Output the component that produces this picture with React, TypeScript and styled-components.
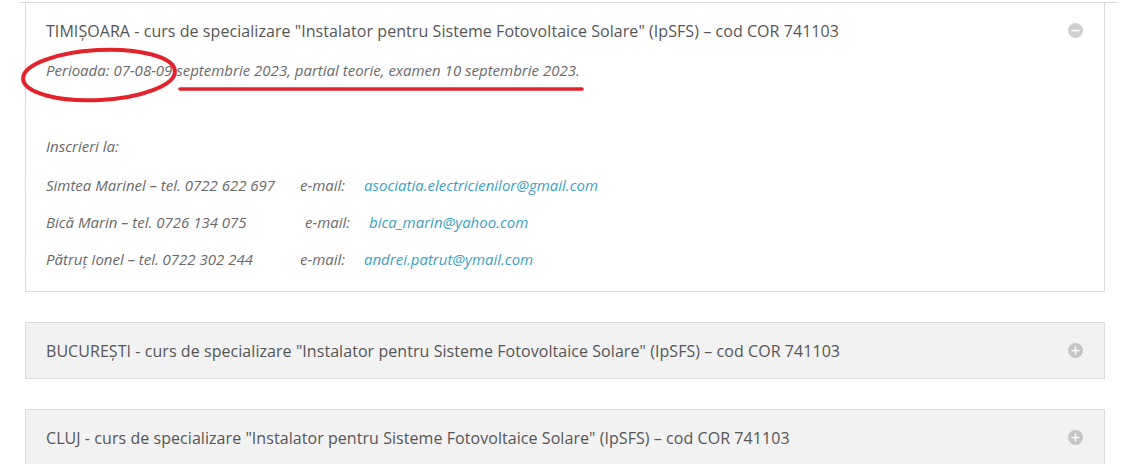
import React from "react";
import styled, { createGlobalStyle } from "styled-components";

const GlobalStyle = createGlobalStyle`
  html, body {
    margin: 0;
    padding: 0;
    background: #ffffff;
  }
  body {
    font-family: "Open Sans", "Noto Sans", sans-serif;
    color: #555;
  }
`;

const Page = styled.div`
  position: relative;
  width: 1128px;
  height: 464px;
  overflow: hidden;
  padding: 2px 23px 0 25px;
  box-sizing: border-box;
  display: flex;
  flex-direction: column;
  gap: 30px;
`;

const TopRule = styled.div`
  position: absolute;
  left: 20px;
  right: 10px;
  top: 2px;
  height: 1px;
  background: #dcdcdc;
`;

const Panel = styled.div<{ open?: boolean }>`
  position: relative;
  border: 1px solid #dcdcdc;
  background: ${(p) => (p.open ? "#ffffff" : "#f2f2f2")};
  flex-shrink: 0;
`;

const Header = styled.div`
  display: flex;
  align-items: center;
  justify-content: space-between;
  height: 55px;
  padding: 0 20px 0 20px;
`;

const Title = styled.h3`
  margin: 0;
  font-size: 16px;
  font-weight: 400;
  color: #555;
  letter-spacing: 0.06px;
`;

const ToggleIcon = styled.svg`
  width: 15px;
  height: 15px;
  margin-right: 1px;
`;

const Body = styled.div`
  margin-top: -2px;
  padding: 0 20px 9px 20px;
  font-size: 15px;
  font-style: italic;
  color: #6a6a6a;
`;

const Line = styled.p<{ gapAfter?: number; tall?: boolean }>`
  margin: 0;
  height: ${(p) => (p.tall ? 39 : 37)}px;
  line-height: 28px;
  margin-bottom: ${(p) => p.gapAfter ?? 0}px;
  white-space: pre;
`;

const Label = styled.span<{ w: number }>`
  display: inline-block;
  width: ${(p) => p.w}px;
`;

const Mail = styled.a`
  color: #3c9fc5;
  text-decoration: none;
`;

const Annotation = styled.svg`
  position: absolute;
  left: -25px;
  top: -2px;
  width: 700px;
  height: 120px;
  pointer-events: none;
  overflow: visible;
`;

const Toggle = ({ open, bg }: { open?: boolean; bg: string }) => (
  <ToggleIcon viewBox="0 0 15 15">
    <circle cx="7.5" cy="7.5" r="7.5" fill={bg} />
    <rect x="3.5" y="6.8" width="8" height="1.5" fill="#fff" />
    {!open && <rect x="6.75" y="3.5" width="1.5" height="8" fill="#fff" />}
  </ToggleIcon>
);

const contacts = [
  { name: "Simtea Marinel – tel. 0722 622 697", w1: 254, w2: 64, mail: "asociatia.electricienilor@gmail.com" },
  { name: "Bică Marin – tel. 0726 134 075", w1: 259, w2: 64, mail: "bica_marin@yahoo.com" },
  { name: "Pătruț Ionel – tel. 0722 302 244", w1: 254, w2: 64, mail: "andrei.patrut@ymail.com" },
];

const course =
  ' - curs de specializare "Instalator pentru Sisteme Fotovoltaice Solare" (IpSFS) – cod COR 741103';

export default function App() {
  return (
    <>
      <GlobalStyle />
      <Page>
        <TopRule />
        <Panel open>
          <Header>
            <Title>TIMIȘOARA{course}</Title>
            <Toggle open bg="#cfcfcf" />
          </Header>
          <Body>
            <Line gapAfter={39}>
              Perioada: 07-08-09 septembrie 2023, partial teorie, examen 10 septembrie 2023.
            </Line>
            <Line tall>Inscrieri la:</Line>
            {contacts.map((c) => (
              <Line key={c.mail}>
                <Label w={c.w1}>{c.name}</Label>
                <Label w={c.w2}>e-mail:</Label>
                <Mail href="#">{c.mail}</Mail>
              </Line>
            ))}
          </Body>
          <Annotation viewBox="0 0 700 120">
            <ellipse
              cx="98"
              cy="74"
              rx="76"
              ry="25"
              transform="rotate(-3 98 74)"
              fill="none"
              stroke="#e3222b"
              strokeWidth="4"
            />
            <line x1="179" y1="88" x2="581" y2="88" stroke="#e3222b" strokeWidth="3.5" strokeLinecap="round" />
          </Annotation>
        </Panel>
        <Panel>
          <Header>
            <Title>BUCUREȘTI{course}</Title>
            <Toggle bg="#c4c4c4" />
          </Header>
        </Panel>
        <Panel>
          <Header>
            <Title>CLUJ{course}</Title>
            <Toggle bg="#c4c4c4" />
          </Header>
        </Panel>
      </Page>
    </>
  );
}
